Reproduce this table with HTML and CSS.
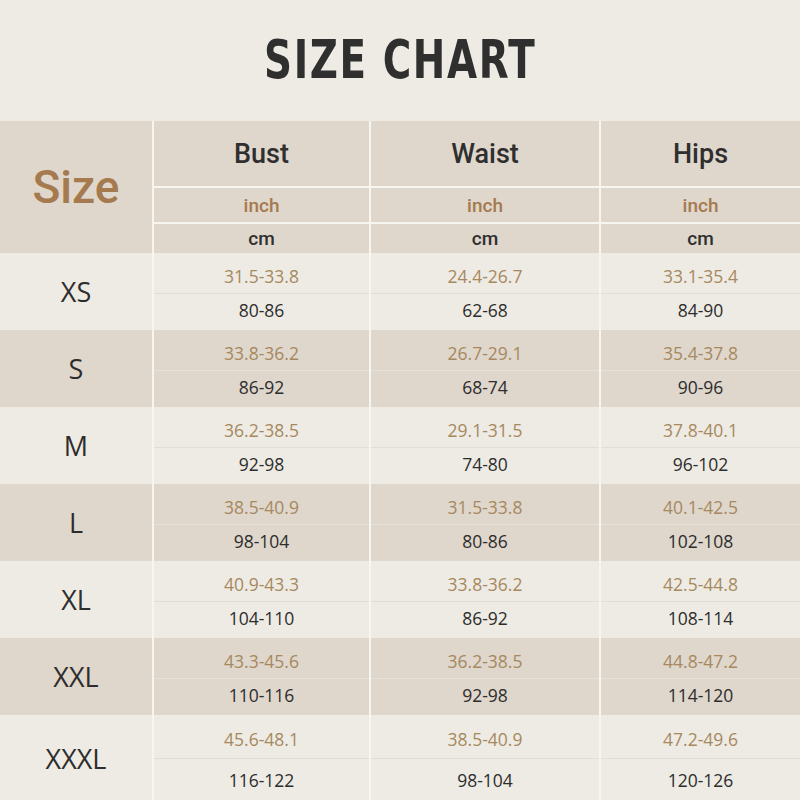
FILE: index.html
```html
<!DOCTYPE html>
<html>
<head>
<meta charset="utf-8">
<link rel="stylesheet" href="styles.css">
</head>
<body>
<div class="page">
  <h1 class="title"><span class="title-text">SIZE CHART</span></h1>
  <table class="chart">
    <colgroup>
      <col class="c1"><col class="c2"><col class="c3"><col class="c4">
    </colgroup>
    <thead>
      <tr class="h1">
        <th class="size-head" rowspan="3">Size</th>
        <th class="vl">Bust</th><th class="vl">Waist</th><th class="vl">Hips</th>
      </tr>
      <tr class="h2">
        <th class="vl unit">inch</th><th class="vl unit">inch</th><th class="vl unit">inch</th>
      </tr>
      <tr class="h3">
        <th class="vl cmh">cm</th><th class="vl cmh">cm</th><th class="vl cmh">cm</th>
      </tr>
    </thead>
    <tbody class="light">
      <tr class="in"><td class="sz" rowspan="2">XS</td><td class="vl">31.5-33.8</td><td class="vl">24.4-26.7</td><td class="vl">33.1-35.4</td></tr>
      <tr class="cm"><td class="vl">80-86</td><td class="vl">62-68</td><td class="vl">84-90</td></tr>
    </tbody>
    <tbody class="dark">
      <tr class="in"><td class="sz" rowspan="2">S</td><td class="vl">33.8-36.2</td><td class="vl">26.7-29.1</td><td class="vl">35.4-37.8</td></tr>
      <tr class="cm"><td class="vl">86-92</td><td class="vl">68-74</td><td class="vl">90-96</td></tr>
    </tbody>
    <tbody class="light">
      <tr class="in"><td class="sz" rowspan="2">M</td><td class="vl">36.2-38.5</td><td class="vl">29.1-31.5</td><td class="vl">37.8-40.1</td></tr>
      <tr class="cm"><td class="vl">92-98</td><td class="vl">74-80</td><td class="vl">96-102</td></tr>
    </tbody>
    <tbody class="dark">
      <tr class="in"><td class="sz" rowspan="2">L</td><td class="vl">38.5-40.9</td><td class="vl">31.5-33.8</td><td class="vl">40.1-42.5</td></tr>
      <tr class="cm"><td class="vl">98-104</td><td class="vl">80-86</td><td class="vl">102-108</td></tr>
    </tbody>
    <tbody class="light">
      <tr class="in"><td class="sz" rowspan="2">XL</td><td class="vl">40.9-43.3</td><td class="vl">33.8-36.2</td><td class="vl">42.5-44.8</td></tr>
      <tr class="cm"><td class="vl">104-110</td><td class="vl">86-92</td><td class="vl">108-114</td></tr>
    </tbody>
    <tbody class="dark">
      <tr class="in"><td class="sz" rowspan="2">XXL</td><td class="vl">43.3-45.6</td><td class="vl">36.2-38.5</td><td class="vl">44.8-47.2</td></tr>
      <tr class="cm"><td class="vl">110-116</td><td class="vl">92-98</td><td class="vl">114-120</td></tr>
    </tbody>
    <tbody class="light last">
      <tr class="in"><td class="sz" rowspan="2">XXXL</td><td class="vl">45.6-48.1</td><td class="vl">38.5-40.9</td><td class="vl">47.2-49.6</td></tr>
      <tr class="cm"><td class="vl">116-122</td><td class="vl">98-104</td><td class="vl">120-126</td></tr>
    </tbody>
  </table>
</div>
</body>
</html>
```

FILE: styles.css
```css
html, body {
  margin: 0;
  padding: 0;
  background: #eeebe4;
}
.page {
  width: 800px;
  height: 800px;
  overflow: hidden;
  background: #eeebe4;
  font-family: "Open Sans", "Noto Sans", sans-serif;
  color: #2d2d2d;
}
.title {
  margin: 0;
  height: 121px;
  display: flex;
  align-items: center;
  justify-content: center;
  font-family: "DejaVu Sans Condensed", "DejaVu Sans", sans-serif;
  font-weight: 700;
  font-size: 54px;
  letter-spacing: 2px;
  color: #2f2f2f;
  padding-bottom: 2px;
  box-sizing: border-box;
}
.title-text {
  display: inline-block;
  transform: scaleX(0.8);
  white-space: nowrap;
}
.chart {
  width: 800px;
  border-collapse: collapse;
  table-layout: fixed;
  text-align: center;
}
.c1 { width: 153px; }
.c2 { width: 217px; }
.c3 { width: 230px; }
.c4 { width: 200px; }
.chart th, .chart td {
  padding: 0;
  text-align: center;
  vertical-align: middle;
}
.vl { border-left: 2px solid #f7f5f0; }
thead th {
  background: #dfd6cc;
  font-family: Roboto, "Noto Sans", sans-serif;
  font-weight: 500;
  color: #2f2f2f;
}
.h1 th { height: 65px; font-size: 27px; }
.h1 th.vl, .h2 th.vl { border-bottom: 2px solid #f7f5f0; }
.h2 th { height: 34px; }
.h3 th { height: 29px; }
.chart .h1 th.size-head {
  font-size: 46px;
  color: #a57a4f;
  font-weight: 500;
  border-bottom: none;
}
.chart .h2 th.unit {
  font-size: 19px;
  color: #a57a4f;
}
.chart .h3 th.cmh {
  font-size: 19px;
  color: #2f2f2f;
}
tbody.light td { background: #eeebe4; }
tbody.dark td { background: #dfd6cc; }
tr.in td {
  height: 35px;
  font-size: 17.5px;
  color: #a6895f;
  padding-top: 5px;
}
tbody.light tr.in td.vl { border-bottom: 1px solid #e3ddd3; }
tbody.dark tr.in td.vl { border-bottom: 1px solid #e7e1d8; }
tr.cm td {
  height: 31px;
  font-size: 17.5px;
  color: #2d2d2d;
  padding-bottom: 5px;
}
.chart tbody tr.in td.sz {
  font-size: 27px;
  color: #2d2d2d;
  border-bottom: none;
  padding-top: 0;
}
tbody.last tr.in td { height: 38px; }
tbody.last tr.cm td { height: 42px; padding-bottom: 0; }
```
